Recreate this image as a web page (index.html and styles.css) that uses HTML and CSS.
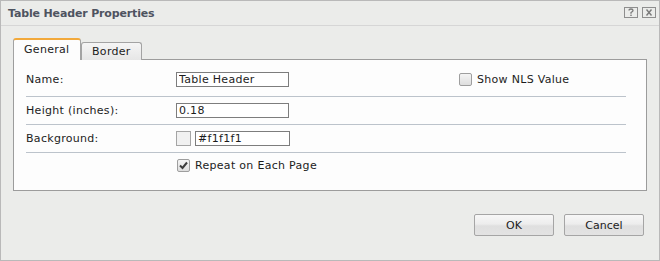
FILE: index.html
```html
<!DOCTYPE html>
<html lang="en">
<head>
    <meta charset="UTF-8">
    <title>Table Header Properties</title>
    <link rel="stylesheet" href="styles.css">
</head>
<body>
    <div class="dialog">
        <div class="titlebar">
            <span class="title">Table Header Properties</span>
            <div class="title-tools">
                <svg class="tool" width="14" height="11" viewBox="0 0 14 11">
                    <rect x="0.5" y="0.5" width="13" height="10" fill="none" stroke="#8e8e8e"/>
                    <path d="M5 3.5 Q5 2 7 2 Q9 2 9 3.5 Q9 4.6 7.5 5.2 L7 5.6 V6.8" fill="none" stroke="#7a7a7a" stroke-width="1.3"/>
                    <rect x="6.3" y="7.6" width="1.4" height="1.4" fill="#7a7a7a"/>
                </svg>
                <svg class="tool" width="14" height="11" viewBox="0 0 14 11">
                    <rect x="0.5" y="0.5" width="13" height="10" fill="none" stroke="#8e8e8e"/>
                    <path d="M4.5 2.5 L9.5 8.5 M9.5 2.5 L4.5 8.5" stroke="#7a7a7a" stroke-width="1.4"/>
                </svg>
            </div>
        </div>

        <div class="content">
            <div class="tabs">
                <div class="tab active">General</div>
                <div class="tab">Border</div>
            </div>

            <div class="panel">
                <div class="row row-first">
                    <span class="label">Name:</span>
                    <input class="field" type="text" value="Table Header">
                    <label class="check">
                        <span class="box"></span>
                        <span>Show NLS Value</span>
                    </label>
                </div>
                <div class="row">
                    <span class="label">Height (inches):</span>
                    <input class="field" type="text" value="0.18">
                </div>
                <div class="row">
                    <span class="label">Background:</span>
                    <div class="color-pick">
                        <span class="swatch"></span>
                        <input class="field field-color" type="text" value="#f1f1f1">
                    </div>
                </div>
                <div class="row row-last">
                    <span class="label"></span>
                    <label class="check">
                        <span class="box checked">
                            <svg width="11" height="11" viewBox="0 0 11 11">
                                <path d="M2 5.5 L4.5 8 L9 2.5" fill="none" stroke="#3c3c3c" stroke-width="2"/>
                            </svg>
                        </span>
                        <span>Repeat on Each Page</span>
                    </label>
                </div>
            </div>

            <div class="buttons">
                <button class="button">OK</button>
                <button class="button">Cancel</button>
            </div>
        </div>
    </div>
</body>
</html>
```

FILE: styles.css
```css
* {
    box-sizing: border-box;
}

body {
    margin: 0;
    font-family: "DejaVu Sans", Verdana, sans-serif;
    font-size: 11px;
    color: #1c1c1c;
    background-color: #ebebea;
}

.dialog {
    width: 660px;
    height: 261px;
    border: 1px solid #b9b9b9;
    background-color: #ebecea;
}

.titlebar {
    height: 25px;
    border-bottom: 1px solid #d6d6d6;
    display: flex;
    align-items: center;
    justify-content: space-between;
    padding: 0 3px 0 7px;
}

.title {
    font-weight: bold;
    color: #4e5360;
    letter-spacing: -0.15px;
}

.title-tools {
    display: flex;
    gap: 4px;
    margin-top: -2px;
}

.tool {
    display: block;
}

.content {
    padding: 12px 12px 0 12px;
}

.tabs {
    display: flex;
    align-items: flex-end;
    height: 22px;
    margin-bottom: -1px;
    position: relative;
}

.tab {
    border: 1px solid #a3a3a3;
    border-bottom: none;
    border-radius: 3px 3px 0 0;
    background: linear-gradient(#f5f5f5, #e6e6e6);
    width: 61px;
    height: 18px;
    padding-left: 10px;
    line-height: 17px;
    letter-spacing: 0.3px;
}

.tab.active {
    width: 68px;
    height: 22px;
    border-top: 2px solid #f2a93b;
    background: #fdfdfd;
    line-height: 19px;
}

.panel {
    width: 634px;
    height: 132px;
    border: 1px solid #9c9c9c;
    background-color: #fdfdfd;
    padding: 0 20px 0 12px;
}

.row {
    display: grid;
    grid-template-columns: 150px 282px auto;
    align-items: center;
    padding: 6px 0;
    border-bottom: 1px solid #bcc3cb;
    letter-spacing: 0.3px;
}

.row-first {
    padding: 12px 0 9px 0;
}

.row-last {
    border-bottom: none;
    padding-top: 6px;
}

.field {
    width: 113px;
    height: 15px;
    border: 1px solid #7d7d7d;
    background: #fff;
    font-family: "DejaVu Sans", Verdana, sans-serif;
    font-size: 11px;
    letter-spacing: 0.3px;
    color: #1c1c1c;
    padding: 0 0 0 2px;
    margin: 0;
    outline: none;
}

.color-pick {
    display: flex;
    gap: 4px;
}

.swatch {
    width: 15px;
    height: 15px;
    border: 1px solid #a5a5a5;
    background-color: #f1f1f1;
}

.field-color {
    width: 95px;
}

.check {
    display: flex;
    align-items: center;
    gap: 5px;
    white-space: nowrap;
}

.box {
    width: 13px;
    height: 13px;
    border: 1px solid #9e9e9e;
    border-radius: 2px;
    background: linear-gradient(#f4f4f4, #dedede);
    display: flex;
    align-items: center;
    justify-content: center;
    margin-left: 1px;
}

.buttons {
    display: flex;
    justify-content: flex-end;
    gap: 10px;
    margin-top: 23px;
    margin-right: 3px;
}

.button {
    width: 80px;
    height: 22px;
    border: 1px solid #a5a5a5;
    border-radius: 2px;
    background: linear-gradient(#f7f7f7 0%, #ededed 45%, #dfdfdf 55%, #e3e3e3 100%);
    font-family: "DejaVu Sans", Verdana, sans-serif;
    font-size: 11px;
    color: #1c1c1c;
    padding: 0;
    cursor: pointer;
}
```
